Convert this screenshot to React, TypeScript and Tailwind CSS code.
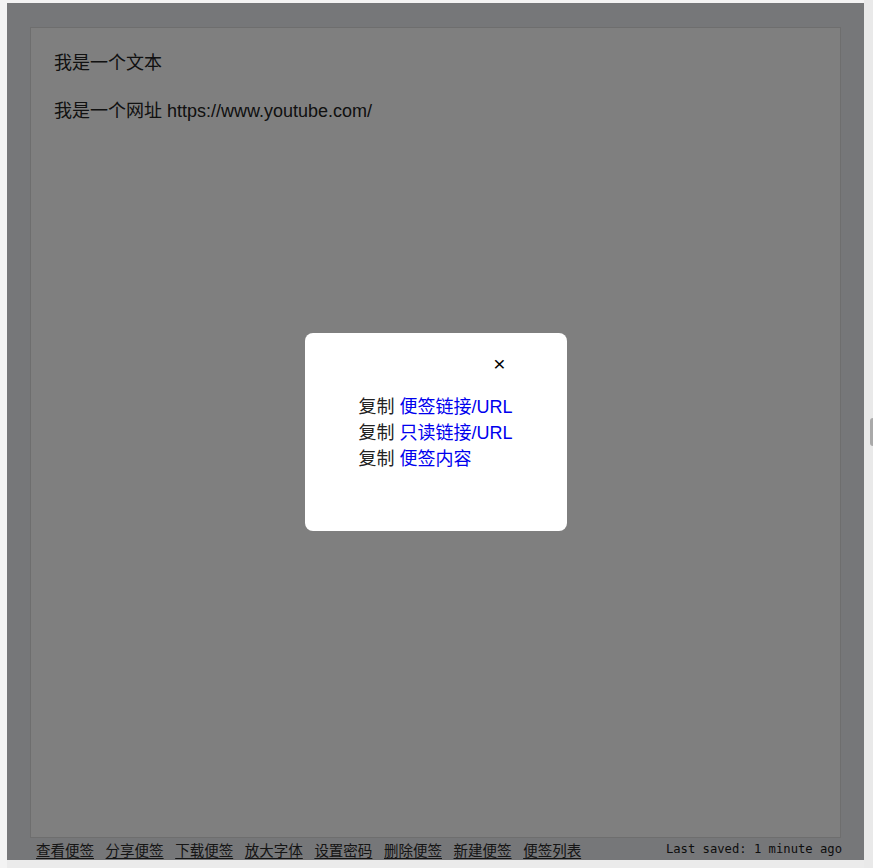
const LINKS = ['查看便签', '分享便签', '下载便签', '放大字体', '设置密码', '删除便签', '新建便签', '便签列表']

const COPY_ITEMS = ['便签链接/URL', '只读链接/URL', '便签内容']

const cjk = "font-['Liberation_Sans','Noto_Sans_CJK_SC',sans-serif]"

function CopyModal() {
  return (
    <div className="absolute inset-0 flex items-center justify-center bg-black/50">
      <div className={`flex h-[198px] w-[262px] flex-col rounded-[8px] bg-white pt-[20px] ${cjk}`}>
        <div className="flex justify-end pr-[61px]">
          <button className="text-[21px] leading-[22px] text-black">×</button>
        </div>
        <div className="mt-[19px] flex flex-col items-center">
          <div className="flex flex-col text-[18px] leading-[26px]">
            {COPY_ITEMS.map(item => (
              <div key={item} className="whitespace-nowrap">
                <span className="text-[#222]">复制 </span>
                <a href="#" className="text-[#0000ee]">{item}</a>
              </div>
            ))}
          </div>
        </div>
      </div>
    </div>
  )
}

export default function App() {
  return (
    <div className="flex h-[868px] w-[873px] overflow-hidden bg-[#f3f3f3]">
      <div className="flex flex-1 flex-col pl-[7px] pt-[3px]">
        {/* Note container */}
        <div className="relative flex h-[857px] w-[857px] flex-col bg-[#edeef2] px-[23px] pt-[24px]">
          <div
            className={`h-[811px] w-[811px] whitespace-pre-wrap border border-[#dddddd] bg-white px-[23px] pt-[23px] text-[18px] leading-[24px] text-[#222] ${cjk}`}
          >
            {'我是一个文本\n\n我是一个网址 https://www.youtube.com/'}
          </div>
          {/* Footer */}
          <div className="-mr-[1px] flex h-[22px] items-center justify-between pl-[6px] pt-[1px]">
            <div className="flex gap-[11.6px] font-['Noto_Sans_CJK_SC',sans-serif] text-[14.5px] leading-[18px]">
              {LINKS.map(l => (
                <a key={l} href="#" className="text-[#2a2a2a] underline underline-offset-2">
                  {l}
                </a>
              ))}
            </div>
            <span className="font-['DejaVu_Sans_Mono',monospace] text-[12.2px] text-[#1a1a1a]">Last saved: 1 minute ago</span>
          </div>
          <CopyModal />
        </div>
        <div className="flex-1 bg-[#ebebeb]" />
      </div>
      {/* Scrollbar strip */}
      <div className="flex w-[9px] flex-col bg-[#e9e9e9] pt-[418px]">
        <div className="ml-[6px] h-[28px] w-[3px] rounded-l-sm bg-[#a9a9a9]" />
      </div>
    </div>
  )
}
